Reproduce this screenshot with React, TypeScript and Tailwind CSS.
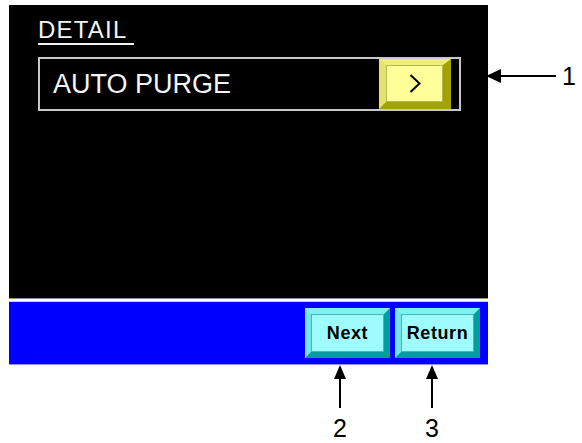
import type { ReactNode } from 'react';

// ── callout arrows ───────────────────────────────────────────────────────────

function ArrowLeft() {
  return (
    <svg width="70" height="16" viewBox="0 0 70 16" className="block shrink-0">
      <polygon points="0,8 15,1 15,15" fill="#000" />
      <line x1="14" y1="8" x2="70" y2="8" stroke="#000" strokeWidth="2" />
    </svg>
  );
}

function ArrowUp() {
  return (
    <svg width="14" height="43" viewBox="0 0 14 43" className="block">
      <polygon points="7,0 1,14 13,14" fill="#000" />
      <line x1="7" y1="13" x2="7" y2="43" stroke="#000" strokeWidth="2" />
    </svg>
  );
}

function Callout({ n }: { n: string }) {
  return (
    <div className="flex w-[20px] flex-col items-center">
      <ArrowUp />
      <span className="mt-[8px] text-[25px] leading-[25px] text-black">{n}</span>
    </div>
  );
}

// ── bevelled panel keys ──────────────────────────────────────────────────────

function YellowKey() {
  return (
    <div className="flex h-[50px] w-[72px] border-t-[6px] border-l-[7px] border-r-[8px] border-b-[7px] border-t-[#eded78] border-l-[#e4e46c] border-r-[#a3a300] border-b-[#a3a300]">
      <div className="flex flex-1 items-center justify-center border border-[#b8b850] bg-[#ffff99]">
        <svg width="12" height="19" viewBox="0 0 12 19">
          <polyline points="1.5,1 10.5,9.5 1.5,18" fill="none" stroke="#000" strokeWidth="2" />
        </svg>
      </div>
    </div>
  );
}

function CyanKey({ children }: { children: ReactNode }) {
  return (
    <div className="flex h-[50px] w-[85px] border-t-[6px] border-l-[6px] border-r-[6px] border-b-[6px] border-t-[#7ff0f0] border-l-[#70e6e6] border-r-[#009e9e] border-b-[#009e9e]">
      <div className="flex flex-1 items-center justify-center border border-[#40b8b8] bg-[#9ffcfc] text-[18px] font-bold leading-none tracking-[0.6px] text-black">
        {children}
      </div>
    </div>
  );
}

// ── main ─────────────────────────────────────────────────────────────────────

export default function App() {
  return (
    <div className="min-h-screen bg-white pl-[9px] pt-[5px] font-['Liberation_Sans',Arial,sans-serif]">
      <div className="flex">
        {/* screen */}
        <div className="flex w-[479px] flex-col">
          <div className="h-[293px] bg-black pl-[29px] pt-[13px]">
            <span className="inline-block border-b-2 border-[#f0f0f0] pb-[1px] pr-[7px] text-[24px] leading-[24px] tracking-[1.2px] text-[#f4f4f4]">
              DETAIL
            </span>

            <div className="mt-[12px] flex h-[54px] w-[423px] items-center justify-between border-2 border-[#c8c8c8] pl-[13px] pr-[8px]">
              <span className="text-[27px] leading-none text-[#f4f4f4]">AUTO PURGE</span>
              <YellowKey />
            </div>
          </div>

          <div className="h-[4px] border-t border-b border-t-[#8a8a8a] border-b-[#c8c8f4] bg-white" />

          <div className="flex h-[63px] items-center justify-end gap-[5px] border-b border-[#9090ff] bg-[#0000ff] pr-[8px]">
            <CyanKey>Next</CyanKey>
            <CyanKey>Return</CyanKey>
          </div>
        </div>

        {/* callout 1 */}
        <div className="-ml-[2px] mt-[63px] flex h-[16px] items-center">
          <ArrowLeft />
          <span className="ml-[6px] text-[25px] leading-[25px] text-black">1</span>
        </div>
      </div>

      {/* callouts 2 and 3 */}
      <div className="flex gap-[72px] pl-[321px]">
        <Callout n="2" />
        <Callout n="3" />
      </div>
    </div>
  );
}
